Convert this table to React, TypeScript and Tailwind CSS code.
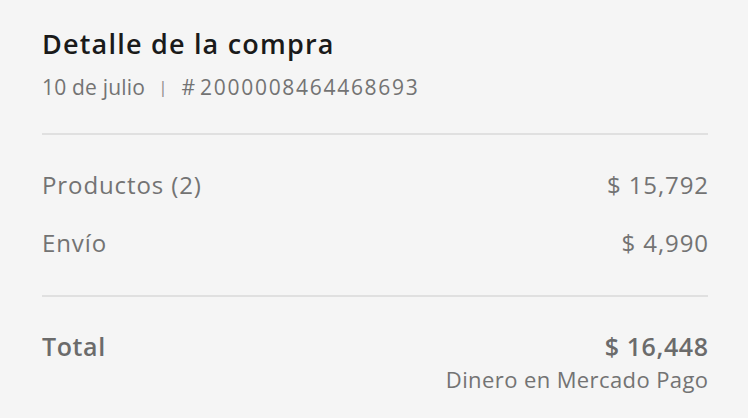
export default function App() {
  const font = { fontFamily: '"Open Sans", "Lato", sans-serif' };
  return (
    <div className="w-[748px] h-[418px] bg-[#f5f5f5] overflow-hidden" style={font}>
      <div className="pl-[42px] pr-[40px] pt-[28px]">
        <h1 className="text-[27px] leading-[32px] font-semibold tracking-[1.2px] text-[#1a1a1a]">Detalle de la compra</h1>
        <div className="mt-[15px] text-[21px] leading-[24px] text-[#737373] flex items-center">
          <span className="tracking-[0.2px]">10 de julio</span>
          <span className="ml-[13px] mr-[14px] text-[17px] text-[#8c8c8c]">|</span>
          <span className="mr-[5px]">#</span>
          <span className="tracking-[1.7px]">2000008464468693</span>
        </div>
        <div className="mt-[34px] h-[2px] bg-[#e0e0e0]" />
        <div className="mt-[35px] flex justify-between text-[24px] leading-[30px] text-[#737373] tracking-[0.9px]">
          <span>Productos (2)</span>
          <span className="-mr-[0.9px]">$ 15,792</span>
        </div>
        <div className="mt-[28px] flex justify-between text-[24px] leading-[30px] text-[#737373] tracking-[0.9px]">
          <span>Envío</span>
          <span className="-mr-[0.9px]">$ 4,990</span>
        </div>
        <div className="mt-[37px] h-[2px] bg-[#e0e0e0]" />
        <div className="mt-[34px] flex justify-between text-[25px] leading-[30px] font-semibold text-[#6b6b6b] tracking-[0.6px]">
          <span>Total</span>
          <span className="-mr-[0.6px]">$ 16,448</span>
        </div>
        <div className="mt-[6px] text-right text-[22px] leading-[24px] text-[#737373] tracking-[0.4px] -mr-[0.4px]">Dinero en Mercado Pago</div>
      </div>
    </div>
  );
}
